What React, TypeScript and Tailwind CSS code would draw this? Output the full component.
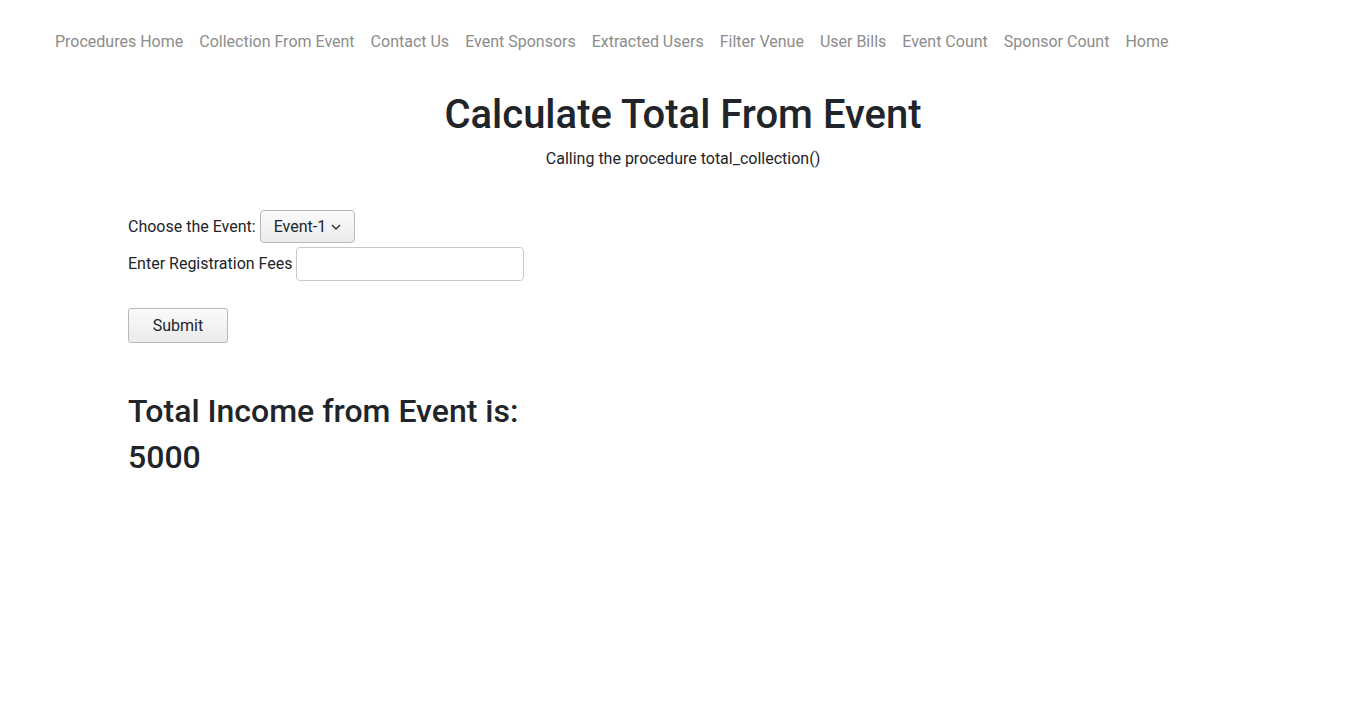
import { useState } from 'react';

const links = [
  'Procedures Home',
  'Collection From Event',
  'Contact Us',
  'Event Sponsors',
  'Extracted Users',
  'Filter Venue',
  'User Bills',
  'Event Count',
  'Sponsor Count',
  'Home',
];

export default function App() {
  const [fees, setFees] = useState('');

  return (
    <div className="min-h-[706px] bg-white text-[#212529] font-['Roboto',sans-serif]">
      {/* Navbar */}
      <nav className="flex items-center pl-[47px] pt-[31px] h-[53px]">
        {links.map((l) => (
          <a key={l} href="#" className="px-2 text-[16px] leading-6 text-[#8c8c8c] hover:text-[#595959]">
            {l}
          </a>
        ))}
      </nav>

      <div className="flex flex-col items-center mt-[38px]">
        <h1 className="text-[40px] leading-[48px] font-medium">Calculate Total From Event</h1>
        <p className="text-[16px] leading-6 mt-[8px]">Calling the procedure total_collection()</p>
      </div>

      <form className="pl-[128px] mt-[39px]" onSubmit={(e) => e.preventDefault()}>
        <div className="flex items-center h-[33px]">
          <label className="text-[16px] mr-[4px]">Choose the Event:</label>
          <div className="relative flex items-center h-[33px] w-[95px] border border-[#b8b8b8] rounded-[4px] bg-gradient-to-b from-[#fafafa] to-[#ececec]">
            <span className="pl-[13px] text-[16px] text-[#212529]">Event-1</span>
            <svg className="absolute right-[12px] top-[12px]" width="12" height="8" viewBox="0 0 12 8">
              <path d="M2 2 L6 6 L10 2" fill="none" stroke="#333" strokeWidth="1.5" />
            </svg>
          </div>
        </div>
        <div className="flex items-center h-[34px] mt-[4px]">
          <label className="text-[16px] mr-[3px]">Enter Registration Fees</label>
          <input
            value={fees}
            onChange={(e) => setFees(e.target.value)}
            className="h-[34px] w-[228px] border border-[#c9c9c9] rounded-[4px] px-2 outline-none"
          />
        </div>
        <button
          type="submit"
          className="mt-[27px] h-[35px] w-[100px] border border-[#b8b8b8] rounded-[3px] bg-gradient-to-b from-[#fafafa] to-[#ebebeb] text-[16px] text-[#212529]"
        >
          Submit
        </button>
      </form>

      <div className="pl-[128px] mt-[45px] text-[32px] leading-[46px] font-medium">
        <div>Total Income from Event is:</div>
        <div>5000</div>
      </div>
    </div>
  );
}
